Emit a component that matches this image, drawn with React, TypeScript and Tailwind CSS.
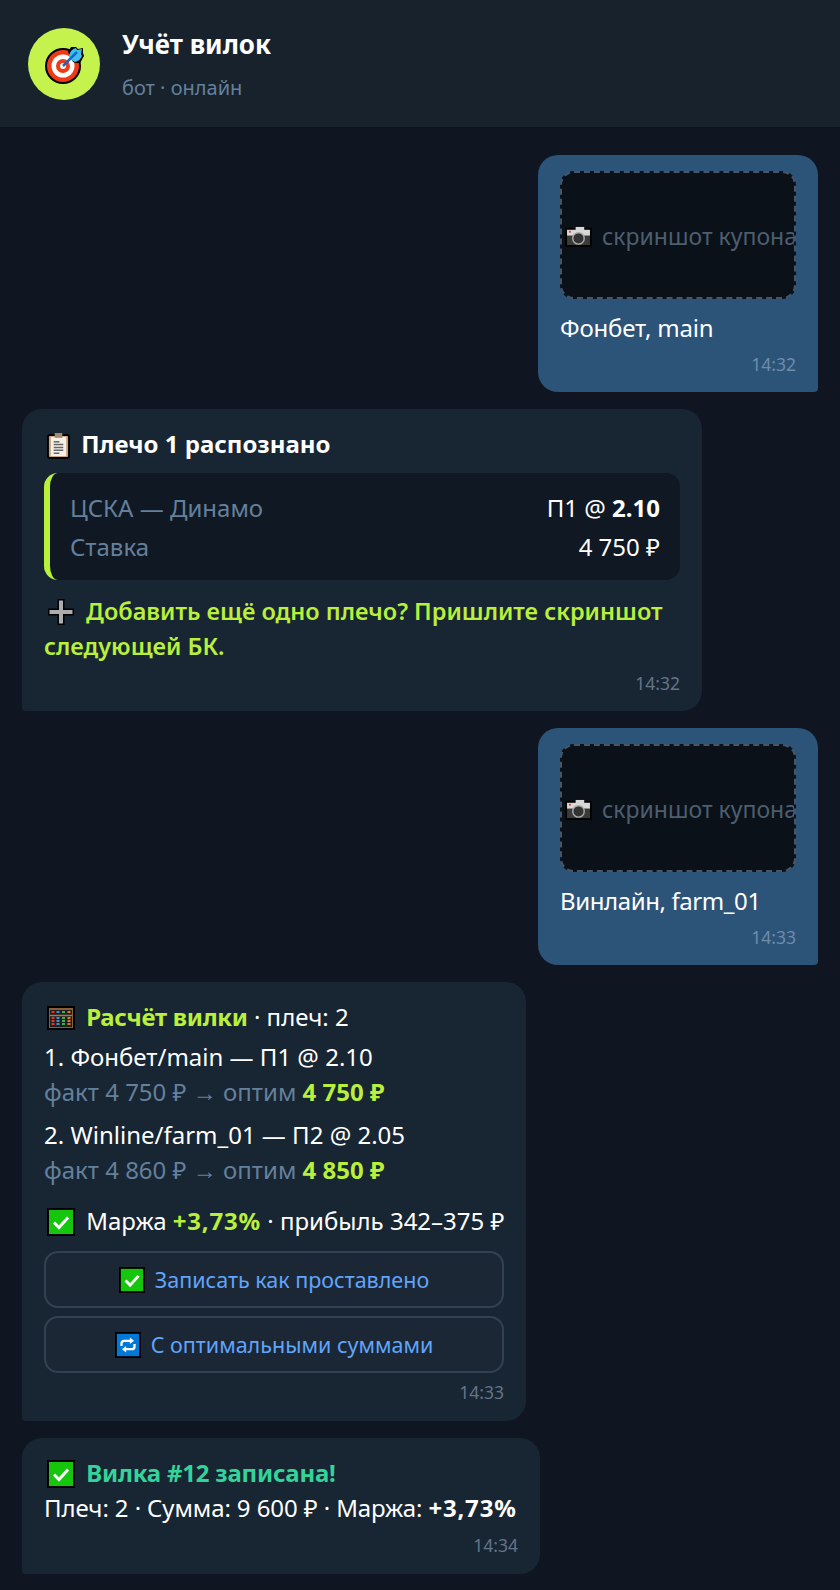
import type { ReactNode } from 'react';

const Tick = ({ small }: { small?: boolean }) => (
  <svg
    viewBox="0 0 28 28"
    className={small ? 'inline-block w-[26px] h-[26px] align-[-6px] mr-[2px]' : 'inline-block w-[28px] h-[28px] align-[-6px] ml-[3px] mr-[5px]'}
  >
    <rect x="1" y="1" width="26" height="26" fill="#16c60c" stroke="#000" strokeWidth="2" />
    <path d="M7 14.500l5 5 9-10" fill="none" stroke="#fff" strokeWidth="3" />
  </svg>
);

const Repeat = () => (
  <svg viewBox="0 0 28 28" className="inline-block w-[26px] h-[26px] align-[-6px] mr-[2px]">
    <rect x="1" y="1" width="26" height="26" fill="#0078d7" stroke="#000" strokeWidth="2" />
    <path d="M7 15v-2.500q0-3 3-3h8M21 13v2.500q0 3-3 3h-8" fill="none" stroke="#fff" strokeWidth="2.500" />
    <path d="M16 6l4.500 3.500L16 13zM12 15l-4.500 3.500L12 22z" fill="#fff" />
  </svg>
);

const Camera = () => (
  <svg viewBox="0 0 28 22" className="inline-block shrink-0 w-[27px] h-[21px] align-[-2px] ml-[3px] mr-[4px]">
    <rect x="1" y="3" width="26" height="18" fill="#3a3a3a" stroke="#000" strokeWidth="2" />
    <rect x="2" y="4" width="24" height="6" fill="#d8d8d8" />
    <rect x="11" y="1" width="9" height="4" fill="#d8d8d8" />
    <circle cx="14" cy="13" r="6" fill="#333" stroke="#aaa" strokeWidth="1.500" />
    <rect x="4" y="5" width="2" height="2" fill="#e8433a" />
  </svg>
);

const Clipboard = () => (
  <svg viewBox="0 0 24 28" className="inline-block w-[23px] h-[27px] align-[-6px] ml-[3px] mr-[5px]">
    <rect x="1" y="3" width="22" height="24" rx="2" fill="#c8a27a" stroke="#000" strokeWidth="2" />
    <rect x="4" y="5" width="16" height="20" fill="#f4f1ea" />
    <rect x="8" y="1" width="8" height="5" fill="#a08a70" />
    <path d="M7 10h6M7 13h10M7 16h10M7 19h10M7 22h6" stroke="#666" strokeWidth="1.500" />
  </svg>
);

const Plus = () => (
  <svg viewBox="0 0 28 28" className="inline-block w-[28px] h-[28px] align-[-6px] ml-[3px] mr-[5px]">
    <path d="M10.500 1h7v9.500H27v7h-9.500V27h-7v-9.500H1v-7h9.500z" fill="#000" />
    <path d="M12 2.500h4V12h9.500v4H16v9.500h-4V16H2.500v-4H12z" fill="#adadad" />
  </svg>
);

const Abacus = () => (
  <svg viewBox="0 0 28 24" className="inline-block w-[28px] h-[24px] align-[-4px] ml-[3px] mr-[5px]">
    <rect x="1" y="1" width="26" height="22" fill="#8a5f38" stroke="#000" strokeWidth="2" />
    <rect x="3" y="4" width="22" height="17" fill="#1f1f1f" />
    <path d="M3 9.500h22" stroke="#a87a4a" strokeWidth="1.500" />
    <path d="M6 5v3M6 11v9" stroke="#e0342c" strokeWidth="3" strokeDasharray="2 1" />
    <path d="M11 5v3M11 11v9" stroke="#3f8fd6" strokeWidth="3" strokeDasharray="2 1" />
    <path d="M16.500 5v3M16.500 11v9" stroke="#3fb04f" strokeWidth="3" strokeDasharray="2 1" />
    <path d="M22 5v3M22 11v9" stroke="#e07a1f" strokeWidth="3" strokeDasharray="2 1" />
  </svg>
);

const Target = () => (
  <svg viewBox="0 0 42 42" className="w-[42px] h-[42px]">
    <circle cx="20" cy="23" r="17" fill="#f03a17" stroke="#000" strokeWidth="2" />
    <circle cx="20" cy="23" r="11.500" fill="#fff" />
    <circle cx="20" cy="23" r="7" fill="#f03a17" />
    <circle cx="20" cy="23" r="3" fill="#fff" />
    <path d="M25 9l3-5h5l2 2 5-1v5l1 3-4 7h-4l-3-1z" fill="#000" />
    <path d="M26 12q2-6 7-7l1 2 5-1-1 5 1 2q-2 5-7 6l-2-1q-3-2-4-6z" fill="#42bdf0" />
    <path d="M20 23L34 9" stroke="#0a6fc4" strokeWidth="2.500" />
  </svg>
);

const Bubble = ({ side, className = '', children }: { side: 'me' | 'bot'; className?: string; children: ReactNode }) => (
  <div
    className={
      side === 'me'
        ? `self-end bg-[#2c5378] rounded-[20px] rounded-br-[4px] px-[22px] pt-[16px] pb-[16px] ${className}`
        : `self-start bg-[#182532] rounded-[20px] rounded-bl-[4px] px-[22px] pt-[17px] pb-[16px] ${className}`
    }
  >
    {children}
  </div>
);

const Time = ({ children, me, className = 'mt-[8px]' }: { children: ReactNode; me?: boolean; className?: string }) => (
  <div className={`text-right text-[17.5px] leading-[23px] ${className} ${me ? 'text-[#6f8ba8]' : 'text-[#64748b]'}`}>
    {children}
  </div>
);

const Shot = () => (
  <div className="w-[236px] h-[128px] bg-[#0a1118] border-2 border-dashed border-[#475569] rounded-[14px] flex items-center overflow-hidden whitespace-pre text-[23px] text-[#4d5e70] pt-[3px] mb-[11px]">
    <Camera />
    <span> скриншот купона</span>
  </div>
);

const KeyBtn = ({ children }: { children: ReactNode }) => (
  <div className="h-[57px] border-2 border-[#334155] bg-[#1c2736] rounded-[14px] flex items-center justify-center text-[21.5px] text-[#60a5fa] gap-[8px]">
    {children}
  </div>
);

export default function App() {
  return (
    <div className="w-[840px] h-[1590px] bg-[#0f1621] text-white text-[24px] leading-[35px] font-['Noto_Sans','Open_Sans',sans-serif] overflow-hidden">
      <header className="h-[128px] bg-[#18222d] border-b border-[#0c131b] flex items-start gap-[22px] pl-[28px] pt-[28px]">
        <div className="w-[72px] h-[72px] rounded-full bg-[#c6f24e] flex items-center justify-center">
          <Target />
        </div>
        <div>
          <div className="font-bold text-[26px] leading-[32px] mb-[13px]">Учёт вилок</div>
          <div className="text-[20px] leading-[30px] text-[#64809c]">бот · онлайн</div>
        </div>
      </header>

      <main className="flex flex-col gap-[17px] px-[22px] pt-[27px]">
        <Bubble side="me">
          <Shot />
          <div className="tracking-[-0.2px]">Фонбет, main</div>
          <Time me>14:32</Time>
        </Bubble>

        <Bubble side="bot" className="w-[680px]">
          <div className="font-bold">
            <Clipboard /> Плечо 1 распознано
          </div>
          <div className="mt-[12px] mb-[14px] bg-[#101923] border-l-[6px] border-[#b8f03c] rounded-[14px] pl-[20px] pr-[20px] pt-[17px] pb-[16px] flex flex-col gap-[4px]">
            <div className="flex justify-between">
              <span className="text-[#64809c]">ЦСКА — Динамо</span>
              <span>
                П1 @ <b>2.10</b>
              </span>
            </div>
            <div className="flex justify-between">
              <span className="text-[#64809c]">Ставка</span>
              <span>4 750 ₽</span>
            </div>
          </div>
          <div className="font-semibold text-[23.5px] text-[#b8f03c]">
            <Plus /> Добавить ещё одно плечо? Пришлите скриншот следующей БК.
          </div>
          <Time>14:32</Time>
        </Bubble>

        <Bubble side="me">
          <Shot />
          <div className="tracking-[-0.4px]">Винлайн, farm_01</div>
          <Time me>14:33</Time>
        </Bubble>

        <Bubble side="bot" className="w-[504px] pb-[17px]">
          <div className="mb-[5px]">
            <Abacus /> <b className="text-[#b8f03c] tracking-[-0.3px]">Расчёт вилки</b> · плеч: 2
          </div>
          <div>1. Фонбет/main — П1 @ 2.10</div>
          <div className="text-[#64809c]">
            факт 4 750 ₽ → оптим <b className="text-[#b8f03c]">4 750 ₽</b>
          </div>
          <div className="mt-[8px]">2. Winline/farm_01 — П2 @ 2.05</div>
          <div className="text-[#64809c]">
            факт 4 860 ₽ → оптим <b className="text-[#b8f03c]">4 850 ₽</b>
          </div>
          <div className="mt-[16px] mb-[13px] whitespace-nowrap">
            <Tick /> Маржа <b className="text-[#b8f03c] tracking-[0.8px]">+3,73%</b> · прибыль 342–375 ₽
          </div>
          <div className="flex flex-col gap-[8px]">
            <KeyBtn>
              <Tick small />
              Записать как проставлено
            </KeyBtn>
            <KeyBtn>
              <Repeat />
              С оптимальными суммами
            </KeyBtn>
          </div>
          <Time>14:33</Time>
        </Bubble>

        <Bubble side="bot" className="w-[518px]">
          <div>
            <Tick /> <b className="text-[#34d399] tracking-[-0.2px]">Вилка #12 записана!</b>
          </div>
          <div className="whitespace-nowrap tracking-[-0.1px]">
            Плеч: 2 · Сумма: 9 600 ₽ · Маржа: <b className="tracking-[0.8px]">+3,73%</b>
          </div>
          <Time className="mt-[9px] mb-[1px]">14:34</Time>
        </Bubble>
      </main>
    </div>
  );
}
